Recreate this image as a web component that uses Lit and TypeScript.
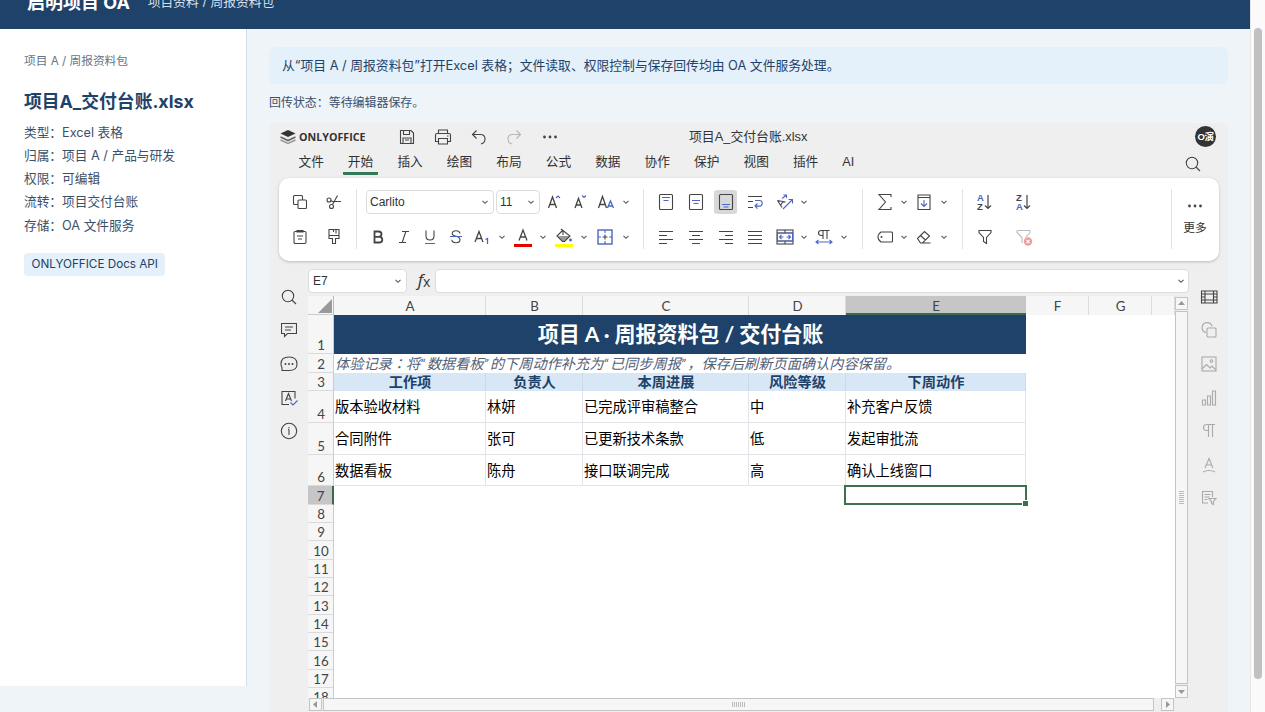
import { LitElement, html, css, svg, nothing } from "lit";
import { customElement, property } from "lit/decorators.js";

const K = "#444";
const B = "#4a66c4";

const ICONS: Record<string, [number, number, unknown]> = {
  save: [16, 16, svg`<path d="M1.5 1.5h10.500l2.500 2.500v10.500h-13zM4.500 1.500v4h6v-4M4 14.500v-5.500h8v5.500M6 11h4"/>`],
  print: [18, 16, svg`<path d="M4.500 4.500v-3.500h9v3.500M4.500 12.500h-3v-6.500q0-1.500 1.500-1.500h12q1.500 0 1.500 1.500v6.500h-3M4.500 9.500h9v5.500h-9zM13 7h1.500"/>`],
  undo: [16, 16, svg`<path d="M5.500 1.500l-4 4 4 4M1.500 5.500h8q4.500 0 4.500 4.500 0 4-4 5"/>`],
  redo: [16, 16, svg`<path stroke="#b5b5b5" d="M10.500 1.500l4 4-4 4M14.500 5.500h-8q-4.500 0-4.500 4.500 0 4 4 5"/>`],
  dots: [16, 6, svg`<g fill="#444" stroke="none"><circle cx="2.500" cy="3" r="1.400"/><circle cx="8" cy="3" r="1.400"/><circle cx="13.500" cy="3" r="1.400"/></g>`],
  search: [16, 16, svg`<circle cx="7" cy="7" r="5.700"/><path d="M11 11l4 4"/>`],
  chev: [8, 8, svg`<path stroke="#555" d="M1.500 2.800l2.500 2.500 2.500-2.500"/>`],
  copy: [16, 16, svg`<rect x="6" y="6" width="8.500" height="8.500" rx="1"/><path d="M6 10.500h-3.500q-1 0-1-1v-7q0-1 1-1h7q1 0 1 1v3.500"/>`],
  cut: [16, 16, svg`<circle cx="3" cy="6" r="2"/><circle cx="5.500" cy="12.500" r="2"/><path d="M5 6.500q2.500 2 4 1h6M6.500 10.500l5-9"/>`],
  paste: [16, 16, svg`<rect x="2" y="2.500" width="12" height="12" rx="1.200"/><path d="M5 2.500v-1h6v1.500h-6zM5 7h6M6 10h4"/>`],
  brush: [16, 16, svg`<path d="M3 .5h10v9h-3.500v5h-3v-5h-3.500zM3 6.500h10M7.500 .5v2.500M10 .5v4"/>`],
  inc: [16, 16, svg`<path stroke-width="1.300" d="M2.500 14l4-11 4 11M4 10.500h5.500"/><path stroke=${B} d="M10 4l2-2 2 2"/>`],
  dec: [16, 16, svg`<path stroke-width="1.300" d="M3 14l3.500-9.500 3.500 9.500M4.500 11h4.500"/><path stroke=${B} d="M10 1.500l2 2 2-2"/>`],
  caseA: [18, 16, svg`<path stroke-width="1.300" d="M1.500 14l4-11.500 4 11.500M3 10.500h5.500"/><path stroke=${B} stroke-width="1.300" d="M10.500 14l3-7 3 7M11.500 12h4"/>`],
  bold: [16, 16, svg`<path stroke-width="1.800" d="M4.500 2.500h4q3 0 3 2.700 0 2.600-3 2.600h-4zM4.500 7.800h4.800q3 0 3 2.900 0 2.800-3 2.800h-4.800z"/>`],
  italic: [16, 16, svg`<path d="M6 2.500h7M3 13.500h7M9.800 2.500l-3.600 11"/>`],
  under: [16, 16, svg`<path d="M4 1.500v5.500q0 4 4 4t4-4v-5.500"/><path stroke=${B} d="M3 14.500h10"/>`],
  strike: [16, 16, svg`<path d="M12 4.500q-.500-2.700-4-2.700t-3.800 2.700q0 2 3.800 2.800t4 3.500q0 3-4 3t-4.200-3"/><path stroke=${B} d="M2 7.500h12"/>`],
  sub: [18, 16, svg`<path stroke-width="1.300" d="M2 13l4-10.500 4 10.500M3.500 9.500h5"/><path stroke=${B} stroke-width="1.300" d="M12.500 10.500l2-1v5.500"/>`],
  fontcolor: [18, 20, svg`<path stroke-width="1.300" d="M5 13.500l4-10.500 4 10.500M6.500 10h5"/><path stroke="#e60000" stroke-width="3" d="M0 18.500h18"/>`],
  fill: [18, 20, svg`<path fill="#999" d="M3 9h12l-5.500 5h-2z" stroke="none"/><path d="M6 2l9 7-5.500 5.500h-2l-5.500-5.500 6-6M8 8v-5"/><circle cx="15.500" cy="13" r=".9" fill=${B} stroke=${B}/><path stroke="#ff0" stroke-width="3" d="M0 18.500h18"/>`],
  border: [16, 16, svg`<rect x="1" y="1" width="14" height="14" stroke=${B} stroke-width="1.400"/><path stroke=${B} d="M8 1v3M8 12v3M1 8h3M12 8h3"/><path d="M8 5.500v5M5.500 8h5"/>`],
  vtop: [16, 18, svg`<rect x="1.500" y="1.500" width="13" height="15" rx="1"/><path stroke=${B} d="M4 4.500h8M5.500 7.500h5"/>`],
  vmid: [16, 18, svg`<rect x="1.500" y="1.500" width="13" height="15" rx="1"/><path stroke=${B} d="M4 7.500h8M5.500 10.500h5"/>`],
  vbot: [16, 18, svg`<rect x="1.500" y="1.500" width="13" height="15" rx="1"/><path stroke=${B} d="M4 11.500h8M5.500 14h5"/>`],
  wrap: [16, 16, svg`<path d="M1 2.500h14M1 7.500h5M1 13.500h5"/><path stroke=${B} d="M8 6.500h4.500q2.700 0 2.700 2.800t-2.700 2.800h-4.500M10.500 9.500l-2.500 2.600 2.500 2.600"/>`],
  orient: [18, 16, svg`<path d="M1.500 6.500l8 1.500M1.500 6.500l4.500 7M7 7.500l-2.500 4M1.500 6.500l2 1"/><path stroke=${B} d="M6 4.500l4-3M7.500 1h3v3M7 15l9-9M12.500 5.500h4v4"/>`],
  left: [16, 16, svg`<path d="M1 2.500h14M1 6.500h8M1 10.500h14M1 14.500h8"/>`],
  center: [16, 16, svg`<path d="M1 2.500h14M4 6.500h8M1 10.500h14M4 14.500h8"/>`],
  right: [16, 16, svg`<path d="M1 2.500h14M7 6.500h8M1 10.500h14M7 14.500h8"/>`],
  just: [16, 16, svg`<path d="M1 2.500h14M1 6.500h14M1 10.500h14M1 14.500h14"/>`],
  merge: [18, 16, svg`<rect x="1" y="1" width="16" height="14"/><path d="M1 4h16M1 12h16M9 1v3M9 12v3"/><path stroke=${B} d="M1.500 4h15v8h-15zM3.500 8h4M10.500 8h4M5.500 6l-2 2 2 2M12.500 6l2 2-2 2"/>`],
  dir: [18, 16, svg`<path d="M8 10v-8.500M12 10v-8.500M14.500 1.500h-8q-3 0-3 2.500t3 2.500h1.500"/><path stroke=${B} d="M1 13h16M3.500 11l-2.500 2 2.500 2M14.500 11l2.500 2-2.500 2"/>`],
  sum: [14, 18, svg`<path d="M13 4v-2.500h-12l6.500 7.500-6.500 7.500h12v-2.500"/>`],
  filldown: [14, 18, svg`<path d="M1 2h12v14.500h-12zM1 4.500h12"/><path stroke=${B} d="M7 7v6.500M4 10.500l3 3 3-3"/>`],
  tag: [16, 12, svg`<path d="M4 1h10.500q1 0 1 1v8q0 1-1 1h-10.500q-3-2-3-5t3-5z"/><circle cx="4.500" cy="6" r="1" fill=${K} stroke="none"/>`],
  eraser: [16, 14, svg`<path d="M1.500 8.500l7-7 5 4.500-7 7h-2zM4.500 5.500l5 4.500M6.500 13h8"/>`],
  funnel: [14, 16, svg`<path d="M1 1.500h12v2l-4.500 5v6l-3-2v-4l-4.500-5z"/>`],
  funnelx: [18, 18, svg`<path stroke="#bbb" d="M2 2.500h13v2l-4.500 5M7 15v-5.500l-5-5v-2"/><circle cx="13" cy="13.500" r="4.200" fill="#f39c9c" stroke="none"/><path stroke="#fff" d="M11.500 12l3 3M14.500 12l-3 3"/>`],
  comment: [16, 16, svg`<path d="M.5 1.500h15v10h-9l-3 3v-3h-3zM4 5h8M4 8h6"/>`],
  chat: [18, 16, svg`<path d="M2 14.500v-3q-1-1.500-1-3.500 0-7 8-7t8 7q0 6.500-8 6.500z"/><g fill=${K} stroke="none"><circle cx="5.500" cy="8" r="1"/><circle cx="9" cy="8" r="1"/><circle cx="12.500" cy="8" r="1"/></g>`],
  spell: [18, 16, svg`<path d="M9 14.500h-7v-13h13v7M5.500 11l3-7.500 3 7.500M6.500 9h4"/><path stroke=${B} d="M10.500 12.500l2.500 2.500 4.500-4.500"/>`],
  info: [18, 18, svg`<circle cx="9" cy="9" r="7.700"/><path d="M9 7.500v5.500M9 5v1.200M8 7.500h1"/>`],
  cells: [18, 14, svg`<path d="M1.500 1h15.500v12h-15.500zM5 1v12M13.500 1v12M1.500 4h15.500M1.500 10h15.500M1.500 7h3.500M13.500 7h3.500"/>`],
  shape: [16, 16, svg`<g stroke="#aaa"><path d="M5 10.500a5 5 0 1 1 6-6"/><rect x="6" y="6" width="9" height="9" rx="1"/></g>`],
  image: [16, 16, svg`<g stroke="#aaa"><rect x="1" y="1" width="14" height="14"/><path d="M1 13l4.500-4.500 3.500 3.500 2-2 4 4"/><circle cx="10.500" cy="5" r="1.300"/></g>`],
  chart: [16, 16, svg`<path stroke="#aaa" d="M1.500 10h3v5h-3zM6.500 6h3v9h-3zM11.500 1h3v14h-3z"/>`],
  para: [16, 16, svg`<path stroke="#aaa" d="M7.500 14v-12.500M11.500 14v-12.500M14 1.500h-8q-3.500 0-3.500 3t3.500 3h1.500"/>`],
  art: [14, 16, svg`<path stroke="#aaa" d="M3 11l4-9.500 4 9.500M4.500 8h5M1 15q6-3 12 0"/>`],
  slicer: [16, 16, svg`<path stroke="#aaa" d="M7 13h-5.500v-11.500h10v5.500M3.500 4.500h6M3.500 7h5M3.500 9.500h3M8 8.500h7l-2.500 3v3l-2-1v-2z"/>`],
};

const SHEET_COLS: [string, number][] = [["A", 152], ["B", 97], ["C", 166], ["D", 97], ["E", 180], ["F", 63], ["G", 63], ["", 23]];
const BODY = [
  ["版本验收材料", "林妍", "已完成评审稿整合", "中", "补充客户反馈"],
  ["合同附件", "张可", "已更新技术条款", "低", "发起审批流"],
  ["数据看板", "陈舟", "接口联调完成", "高", "确认上线窗口"],
];
const HEAD = ["工作项", "负责人", "本周进展", "风险等级", "下周动作"];
const MENU = ["文件", "开始", "插入", "绘图", "布局", "公式", "数据", "协作", "保护", "视图", "插件", "AI"];

type Cell = [string, number];
const ribbon = (cells: Cell[]) =>
  cells.map(([n, w]) => html`<span class="cell ${n === "vbot" ? "on" : ""}" style="width:${w}px"><ui-icon name=${n}></ui-icon></span>`);

@customElement("ui-icon")
class UiIcon extends LitElement {
  @property() name = "";
  static styles = css`
    :host { display: inline-flex; flex: none; }
    svg { display: block; fill: none; stroke: #444; stroke-width: 1.1; }
  `;
  render() {
    const i = ICONS[this.name];
    return i ? html`<svg width=${i[0]} height=${i[1]} viewBox="0 0 ${i[0]} ${i[1]}">${i[2]}</svg>` : nothing;
  }
}

@customElement("sheet-grid")
class SheetGrid extends LitElement {
  static styles = css`
    :host { display: block; position: relative; width: 867px; height: 402px; overflow: hidden; background: #fff;
      font: 14px/18px Lato, "Noto Sans CJK JP", sans-serif; color: #000; }
    .row { display: flex; box-sizing: border-box; }
    .row > * { box-sizing: border-box; flex: none; white-space: nowrap; }
    .cols { height: 19px; background: #f6f6f6; color: #444; font-size: 13.300px; }
    .corner { width: 26px; border-right: 1px solid #bbb; border-bottom: 1px solid #ccc; display: flex; justify-content: flex-end; align-items: flex-end; padding: 0 1px 1px 0; }
    .col { text-align: center; line-height: 20px; border-right: 1px solid #dcdcdc; padding-left: 1px; }
    .col.sel { background: #c6c6c6; border-bottom: 2px solid #3a6a4c; border-right: 0; padding-left: 0; }
    .num { width: 26px; background: #f6f6f6; border-right: 1px solid #ccc; border-bottom: 1px solid #dadada; color: #444; padding-left: 1px;
      display: flex; align-items: flex-end; justify-content: center; font-size: 13.300px; line-height: 16px; }
    .num.sel { background: #c6c6c6; border-right: 2px solid #3a6a4c; }
    .r1 { height: 39.300px; } .r2 { height: 18.500px; } .r3 { height: 18.500px; } .rb { height: 31.700px; } .rn { height: 18.330px; }
    .title { width: 692px; background: #1e4269; color: #fff; text-align: center; font-weight: 700; font-size: 21.050px; line-height: 37.500px; padding-left: 1px; letter-spacing: -.05px; }
    .note { padding-left: 1px; font-style: italic; font-size: 14.2px; color: #52617a; line-height: 19px; }
    .q { margin-right: 1.600px; }
    .h { background: #d8e7f5; color: #1e4269; font-weight: 700; font-size: 14.2px; text-align: center; border-right: 1px solid #ccdbe9; padding-left: 1px; }
    .c { font-size: 14.250px; line-height: 32px; padding-left: 1px; border-right: 1px solid #e1e5ea; border-bottom: 1px solid #e1e5ea; }
    .cursor { position: absolute; left: 536px; top: 189px; width: 183px; height: 20px; box-sizing: border-box; border: 2px solid #3f6f52; }
    .knob { position: absolute; right: -3px; bottom: -3px; width: 5px; height: 5px; background: #3f6f52; border: 1px solid #fff; border-right: 0; border-bottom: 0; }
  `;
  render() {
    const w = (i: number) => `width:${SHEET_COLS[i][1]}px`;
    const q = (c: string) => html`<span class="q">${c}</span>`;
    return html`
      <div class="row cols">
        <div class="corner"><svg width="14" height="14"><path d="M14 0v14h-14z" fill="#999"/></svg></div>
        ${SHEET_COLS.map(([n], i) => html`<div class="col ${n === "E" ? "sel" : ""}" style=${w(i)}>${n}</div>`)}
      </div>
      <div class="row r1"><div class="num">1</div><div class="title">项目 A · 周报资料包 / 交付台账</div></div>
      <div class="row r2"><div class="num">2</div><div class="note">体验记录：将${q("“")}数据看板${q("”")}的下周动作补充为${q("“")}已同步周报${q("”")}，保存后刷新页面确认内容保留。</div></div>
      <div class="row r3"><div class="num">3</div>${HEAD.map((t, i) => html`<div class="h" style=${w(i)}>${t}</div>`)}</div>
      ${BODY.map((r, n) => html`<div class="row rb"><div class="num">${n + 4}</div>${r.map((t, i) => html`<div class="c" style=${w(i)}>${t}</div>`)}</div>`)}
      ${Array.from({ length: 12 }, (_, n) => html`<div class="row rn"><div class="num ${n === 0 ? "sel" : ""}">${n + 7}</div></div>`)}
      <div class="cursor"><div class="knob"></div></div>
    `;
  }
}

@customElement("app-root")
class AppRoot extends LitElement {
  static styles = css`
    :host { display: flex; width: 1265px; height: 712px; overflow: hidden; background: #eff4f8;
      font-family: Inter, "Noto Sans CJK SC", sans-serif; color: #3b506a; white-space: nowrap; }
    * { box-sizing: border-box; }
    .page { width: 1250px; display: flex; flex-direction: column; }
    header { height: 28.500px; flex: none; background: #1e4269; color: #fff; display: flex; align-items: flex-end; padding: 0 0 15px 27px; gap: 18px; overflow: hidden; }
    .brand { font-size: 18px; font-weight: 700; line-height: 22px; }
    .crumb { font-size: 12.750px; line-height: 22.500px; color: #d5e0ec; }
    .body { flex: 1; display: flex; min-height: 0; }
    aside { width: 247px; height: 657.500px; flex: none; background: #fff; border-right: 1px solid #d3dde8; padding: 22px 24px; }
    .path { font-size: 11.700px; line-height: 20px; color: #667389; }
    h2 { margin: 17px 0 5.500px; font-size: 17.800px; line-height: 28px; font-weight: 700; color: #1e4269; }
    .meta { font-size: 12.700px; line-height: 23.150px; }
    .chip { display: inline-block; margin-top: 16.500px; height: 23px; line-height: 23px; padding: 0 7.500px; border-radius: 4px; background: #e4f0fa; color: #1e4269; font-size: 11.700px; }
    main { width: 959px; margin-left: 22px; padding-top: 18.500px; display: flex; flex-direction: column; }
    .banner { height: 37px; flex: none; border-radius: 6px; background: #e4f0fa; color: #1e4269; padding-left: 13px; font-size: 12.800px; line-height: 38px; }
    .status { height: 39px; flex: none; line-height: 38.500px; font-size: 11.950px; }
    .editor { flex: 1; min-height: 0; overflow: hidden; background: #efefef; border-radius: 6px 6px 0 0; font-family: "Liberation Sans", "Noto Sans CJK SC", sans-serif; color: #333; }
    .bar { height: 27px; display: grid; grid-template-columns: 100px 1fr 100px; align-items: center; }
    .logo { display: flex; align-items: center; gap: 3px; padding-left: 11px; font: 700 10.700px/14px "Open Sans", sans-serif; }
    .mid { display: grid; grid-template-columns: 20px 36px 36px 36px 34px 37px 1fr; align-items: center; justify-items: center; }
    .doc { font-size: 12.850px; justify-self: start; padding-left: 121px; line-height: 16px; }
    .user { justify-self: end; margin-right: 12px; width: 21px; height: 21px; border-radius: 50%; background: #333; color: #fff; font-size: 9.500px; line-height: 21px; text-align: center; font-weight: 700; letter-spacing: -.5px; }
    .tabs { height: 28px; display: flex; align-items: flex-start; padding-left: 17.500px; }
    .tab { width: 49.450px; display: flex; }
    .tab span { display: block; width: 49.450px; height: 25px; line-height: 24px; font-size: 12.700px; text-align: center; }
    .tab.on span { width: 35px; margin-left: 7px; border-bottom: 3px solid #34785a; border-radius: 0 0 1px 1px; }
    .tab:nth-child(12) span { width: 36px; }
    .find { margin-left: auto; margin-right: 27px; padding-top: 5.500px; }
    .ribbon { width: 940px; height: 83px; margin: 0 10px; background: #fff; border-radius: 10px; box-shadow: 0 1px 3px #bbb; display: flex; padding-top: 11px; }
    .group { height: 60px; border-right: 1px solid #e2e2e2; flex: none; }
    .line { height: 26px; display: flex; align-items: center; }
    .line + .line { margin-top: 9px; }
    .g1 { width: 78px; padding-left: 4px; } .g2 { width: 287px; padding-left: 8px; } .g3 { width: 219px; padding-left: 7px; }
    .g4 { width: 100px; padding-left: 6px; } .g5 { width: 209px; padding-left: 2px; }
    .cell { display: flex; justify-content: center; align-items: center; flex: none; height: 24px; }
    .cell.on { width: 23px; border-radius: 7px; background: linear-gradient(#d8d8d8, #d8d8d8) center / 23px 24px no-repeat; }
    .sel { height: 24px; border: 1px solid #dcdcdc; border-radius: 4px; background: #fff; display: flex; align-items: center; justify-content: space-between; padding: 0 4px 0 3px; font-size: 12px; flex: none; }
    .font { width: 128px; margin-left: 1px; } .size { width: 44px; margin: 0 1px 0 2px; }
    .more { flex: 1; display: flex; flex-direction: column; align-items: center; font-size: 11.800px; padding: 14px 1px 0 0; gap: 11px; line-height: 17px; }
    .formula { height: 24px; margin: 8px 0 3px 39px; display: flex; align-items: center; }
    .name { width: 99px; padding-left: 4px; }
    .fx { width: 28px; height: 24px; padding-left: 6px; display: flex; justify-content: center; font: 14px/25px "Open Sans", sans-serif; }
    .fx i { font-size: 17px; line-height: 22px; }
    .expr { width: 754px; justify-content: flex-end; padding-right: 3px; }
    .work { display: flex; height: 416px; }
    .side { width: 39px; flex: none; display: flex; flex-direction: column; align-items: center; }
    .side span { height: 33.600px; display: flex; align-items: center; }
    .left { margin-top: -16px; }
    .rgt { width: 41px; margin-top: -16px; }
    .sheetcol { width: 867px; }
    .hbar { height: 13px; display: flex; gap: 1px; padding-left: 1px; }
    .box { border: 1px solid #c4c4c4; background: #f6f6f6; display: flex; align-items: center; justify-content: center; flex: none; }
    .sq { width: 13px; height: 13px; }
    .hthumb { width: 831px; height: 13px; margin-right: 6px; }
    .vbar { width: 13px; height: 402px; display: flex; flex-direction: column; gap: 1px; padding-top: 1px; flex: none; }
    .vthumb { width: 13px; height: 373px; }
    .gripv { width: 5px; height: 14px; background: repeating-linear-gradient(#bbb 0 1px, #f6f6f6 1px 2px); }
    .griph { width: 14px; height: 5px; background: repeating-linear-gradient(90deg, #bbb 0 1px, #f6f6f6 1px 2px); }
    .scroll { width: 15px; height: 712px; background: #fafafa; border-left: 1px solid #e6e6e6; padding: 28px 0 0 3px; }
    .thumb { width: 8px; height: 651px; border-radius: 4px; background: #c1c1c1; }
  `;
  render() {
    const tri = (d: string) => html`<svg width="7" height="7"><path d=${d} fill="#999"/></svg>`;
    const side = (names: string[]) => names.map((n) => html`<span><ui-icon name=${n}></ui-icon></span>`);
    return html`
      <div class="page">
        <header><div class="brand">启明项目 OA</div><div class="crumb">项目资料 / 周报资料包</div></header>
        <div class="body">
          <aside>
            <div class="path">项目 A / 周报资料包</div>
            <h2>项目A_交付台账.xlsx</h2>
            <div class="meta">类型：Excel 表格</div>
            <div class="meta">归属：项目 A / 产品与研发</div>
            <div class="meta">权限：可编辑</div>
            <div class="meta">流转：项目交付台账</div>
            <div class="meta">存储：OA 文件服务</div>
            <div class="chip">ONLYOFFICE Docs API</div>
          </aside>
          <main>
            <div class="banner">从“项目 A / 周报资料包”打开Excel 表格；文件读取、权限控制与保存回传均由 OA 文件服务处理。</div>
            <div class="status">回传状态：等待编辑器保存。</div>
            <section class="editor">
              <div class="bar">
                <div class="logo">
                  <svg width="16" height="16" viewBox="0 0 16 16"><path d="M8 1l7.500 3.500-7.500 3.500-7.500-3.500z" fill="#333"/><path d="M.5 8l7.500 3.500 7.500-3.500" fill="none" stroke="#666" stroke-width="1.600"/><path d="M.5 11l7.500 3.500 7.500-3.500" fill="none" stroke="#999" stroke-width="1.500"/></svg>
                  ONLYOFFICE
                </div>
                <div class="mid">
                  <i></i>
                  ${["save", "print", "undo", "redo", "dots"].map((n) => html`<ui-icon name=${n}></ui-icon>`)}
                  <div class="doc">项目A_交付台账.xlsx</div>
                </div>
                <div class="user">O演</div>
              </div>
              <div class="tabs">
                ${MENU.map((t) => html`<div class="tab ${t === "开始" ? "on" : ""}"><span>${t}</span></div>`)}
                <div class="find"><ui-icon name="search"></ui-icon></div>
              </div>
              <div class="ribbon">
                <div class="group g1">
                  <div class="line">${ribbon([["copy", 34], ["cut", 34]])}</div>
                  <div class="line">${ribbon([["paste", 34], ["brush", 34]])}</div>
                </div>
                <div class="group g2">
                  <div class="line">
                    <div class="sel font">Carlito<ui-icon name="chev"></ui-icon></div>
                    <div class="sel size">11<ui-icon name="chev"></ui-icon></div>
                    ${ribbon([["inc", 26], ["dec", 26], ["caseA", 26], ["chev", 14]])}
                  </div>
                  <div class="line">${ribbon([["bold", 26], ["italic", 26], ["under", 26], ["strike", 26], ["sub", 26], ["chev", 13], ["fontcolor", 30], ["chev", 10], ["fill", 32], ["chev", 8], ["border", 34], ["chev", 8]])}</div>
                </div>
                <div class="group g3">
                  <div class="line">${ribbon([["vtop", 30], ["vmid", 30], ["vbot", 29], ["wrap", 30], ["orient", 30], ["chev", 8]])}</div>
                  <div class="line">${ribbon([["left", 30], ["center", 30], ["right", 29], ["just", 30], ["merge", 30], ["chev", 8], ["dir", 32], ["chev", 8]])}</div>
                </div>
                <div class="group g4">
                  <div class="line">${ribbon([["sum", 31], ["chev", 8], ["filldown", 32], ["chev", 8]])}</div>
                  <div class="line">${ribbon([["tag", 31], ["chev", 8], ["eraser", 32], ["chev", 8]])}</div>
                </div>
                <div class="group g5">
                  <div class="line">${["AZ", "ZA"].map((p) => html`<span class="cell" style="width:39px"><svg width="18" height="18" font-family="Liberation Sans" font-weight="700" font-size="9.500"><text x="1" y="8" fill=${p[0] === "A" ? B : K}>${p[0]}</text><text x="1" y="16.500" fill=${p[1] === "A" ? B : K}>${p[1]}</text><path d="M12 2v13.500M9 12.500l3 3 3-3" fill="none" stroke=${K} stroke-width="1.200"/></svg></span>`)}</div>
                  <div class="line">${ribbon([["funnel", 39], ["funnelx", 39]])}</div>
                </div>
                <div class="more"><ui-icon name="dots"></ui-icon>更多</div>
              </div>
              <div class="formula">
                <div class="sel name">E7<ui-icon name="chev"></ui-icon></div>
                <div class="fx"><i>f</i>x</div>
                <div class="sel expr"><ui-icon name="chev"></ui-icon></div>
              </div>
              <div class="work">
                <div class="side left">${side(["search", "comment", "chat", "spell", "info"])}</div>
                <div class="sheetcol">
                  <sheet-grid></sheet-grid>
                  <div class="hbar">
                    <div class="box sq">${tri("M5 0v7l-4-3.500z")}</div>
                    <div class="box hthumb"><div class="griph"></div></div>
                    <div class="box sq">${tri("M2 0v7l4-3.500z")}</div>
                  </div>
                </div>
                <div class="vbar">
                  <div class="box sq">${tri("M0 5h7l-3.500-4z")}</div>
                  <div class="box vthumb"><div class="gripv"></div></div>
                  <div class="box sq">${tri("M0 2h7l-3.500 4z")}</div>
                </div>
                <div class="side rgt">${side(["cells", "shape", "image", "chart", "para", "art", "slicer"])}</div>
              </div>
            </section>
          </main>
        </div>
      </div>
      <div class="scroll"><div class="thumb"></div></div>
    `;
  }
}
